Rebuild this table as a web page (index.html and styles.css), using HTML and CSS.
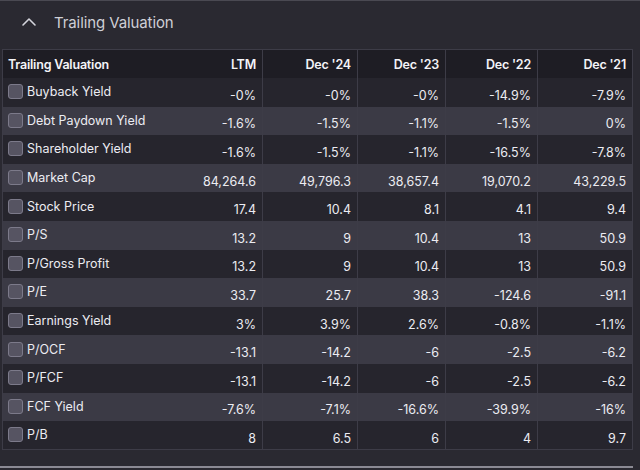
FILE: index.html
```html
<!DOCTYPE html>
<html>
<head>
<meta charset="utf-8">
<link rel="stylesheet" href="styles.css">
</head>
<body>
<div class="panel">
  <div class="panel-head">
    <svg class="chev" width="16" height="10" viewBox="0 0 16 10"><path d="M2 8 L8 2 L14 8" fill="none" stroke="#d4d4dc" stroke-width="1.6" stroke-linecap="round" stroke-linejoin="round"/></svg>
    <span class="title">Trailing Valuation</span>
  </div>
  <div class="table-wrap">
    <table class="grid">
      <colgroup>
        <col class="c-lbl"><col class="c-ltm"><col class="c-24"><col class="c-23"><col class="c-22"><col class="c-21">
      </colgroup>
      <thead>
        <tr><th class="lbl">Trailing Valuation</th><th class="ltm">LTM</th><th>Dec '24</th><th>Dec '23</th><th>Dec '22</th><th>Dec '21</th></tr>
      </thead>
      <tbody>
        <tr class="dk"><td class="lbl"><span class="cb"></span>Buyback Yield</td><td class="ltm">-0%</td><td>-0%</td><td>-0%</td><td>-14.9%</td><td>-7.9%</td></tr>
        <tr class="lt"><td class="lbl"><span class="cb"></span>Debt Paydown Yield</td><td class="ltm">-1.6%</td><td>-1.5%</td><td>-1.1%</td><td>-1.5%</td><td>0%</td></tr>
        <tr class="dk"><td class="lbl"><span class="cb"></span>Shareholder Yield</td><td class="ltm">-1.6%</td><td>-1.5%</td><td>-1.1%</td><td>-16.5%</td><td>-7.8%</td></tr>
        <tr class="lt"><td class="lbl"><span class="cb"></span>Market Cap</td><td class="ltm">84,264.6</td><td>49,796.3</td><td>38,657.4</td><td>19,070.2</td><td>43,229.5</td></tr>
        <tr class="dk"><td class="lbl"><span class="cb"></span>Stock Price</td><td class="ltm">17.4</td><td>10.4</td><td>8.1</td><td>4.1</td><td>9.4</td></tr>
        <tr class="lt"><td class="lbl"><span class="cb"></span>P/S</td><td class="ltm">13.2</td><td>9</td><td>10.4</td><td>13</td><td>50.9</td></tr>
        <tr class="dk"><td class="lbl"><span class="cb"></span>P/Gross Profit</td><td class="ltm">13.2</td><td>9</td><td>10.4</td><td>13</td><td>50.9</td></tr>
        <tr class="lt"><td class="lbl"><span class="cb"></span>P/E</td><td class="ltm">33.7</td><td>25.7</td><td>38.3</td><td>-124.6</td><td>-91.1</td></tr>
        <tr class="dk"><td class="lbl"><span class="cb"></span>Earnings Yield</td><td class="ltm">3%</td><td>3.9%</td><td>2.6%</td><td>-0.8%</td><td>-1.1%</td></tr>
        <tr class="lt"><td class="lbl"><span class="cb"></span>P/OCF</td><td class="ltm">-13.1</td><td>-14.2</td><td>-6</td><td>-2.5</td><td>-6.2</td></tr>
        <tr class="dk"><td class="lbl"><span class="cb"></span>P/FCF</td><td class="ltm">-13.1</td><td>-14.2</td><td>-6</td><td>-2.5</td><td>-6.2</td></tr>
        <tr class="lt"><td class="lbl"><span class="cb"></span>FCF Yield</td><td class="ltm">-7.6%</td><td>-7.1%</td><td>-16.6%</td><td>-39.9%</td><td>-16%</td></tr>
        <tr class="dk"><td class="lbl"><span class="cb"></span>P/B</td><td class="ltm">8</td><td>6.5</td><td>6</td><td>4</td><td>9.7</td></tr>
      </tbody>
    </table>
    <div class="scrollbar"></div>
  </div>
</div>
</body>
</html>
```
FILE: styles.css
```css
html, body {
  margin: 0;
  padding: 0;
  background: #2a2931;
  font-family: Inter, "Noto Sans", sans-serif;
}
.panel {
  width: 640px;
  height: 470px;
  background: #2a2931;
  border-top: 1px solid #4a4952;
  box-sizing: border-box;
}
.panel-head {
  height: 48px;
  display: flex;
  align-items: center;
  padding-left: 21px;
  padding-bottom: 4px;
  box-sizing: border-box;
}
.chev {
  margin-right: 17px;
  margin-top: -2px;
}
.title {
  color: #cfcfd6;
  font-size: 15px;
  letter-spacing: -0.1px;
  margin-top: -1px;
}
.table-wrap {
  padding-left: 2px;
  width: 632px;
}
.grid {
  width: 630px;
  border-collapse: collapse;
  table-layout: fixed;
  font-size: 12.5px;
  color: #ececf2;
  border: 1px solid #3d3c47;
}
.c-lbl { width: 180px; }
.c-ltm { width: 80px; }
.c-24 { width: 95px; }
.c-23 { width: 88px; }
.c-22 { width: 92px; }
.c-21 { width: 95px; }
.grid th, .grid td {
  text-align: right;
  padding: 0 6px 0 4px;
  border-left: 1px solid #3d3c47;
  white-space: nowrap;
  overflow: visible;
}
.grid th.ltm, .grid td.ltm {
  border-left: none;
}
.grid th {
  background: #1e1d24;
  height: 28px;
  font-weight: 600;
  color: #f4f4f8;
  letter-spacing: -0.2px;
}
.grid td {
  height: 28.6px;
  padding-top: 6px;
  box-sizing: border-box;
}
.grid th.lbl, .grid td.lbl {
  text-align: left;
  padding-left: 5px;
}
.grid td.lbl {
  padding-left: 5px;
  padding-top: 0;
  padding-bottom: 1px;
}
.dk td { background: #26252d; }
.lt td { background: #3b3a45; }
.cb {
  display: inline-block;
  width: 13px;
  height: 13px;
  border: 1px solid #7c7a8a;
  background: #565462;
  border-radius: 3px;
  vertical-align: -3px;
  margin-right: 4px;
}
.scrollbar {
  margin-top: 16px;
  margin-left: -2px;
  width: 633px;
  height: 2px;
  background: #8b8a94;
}
```
